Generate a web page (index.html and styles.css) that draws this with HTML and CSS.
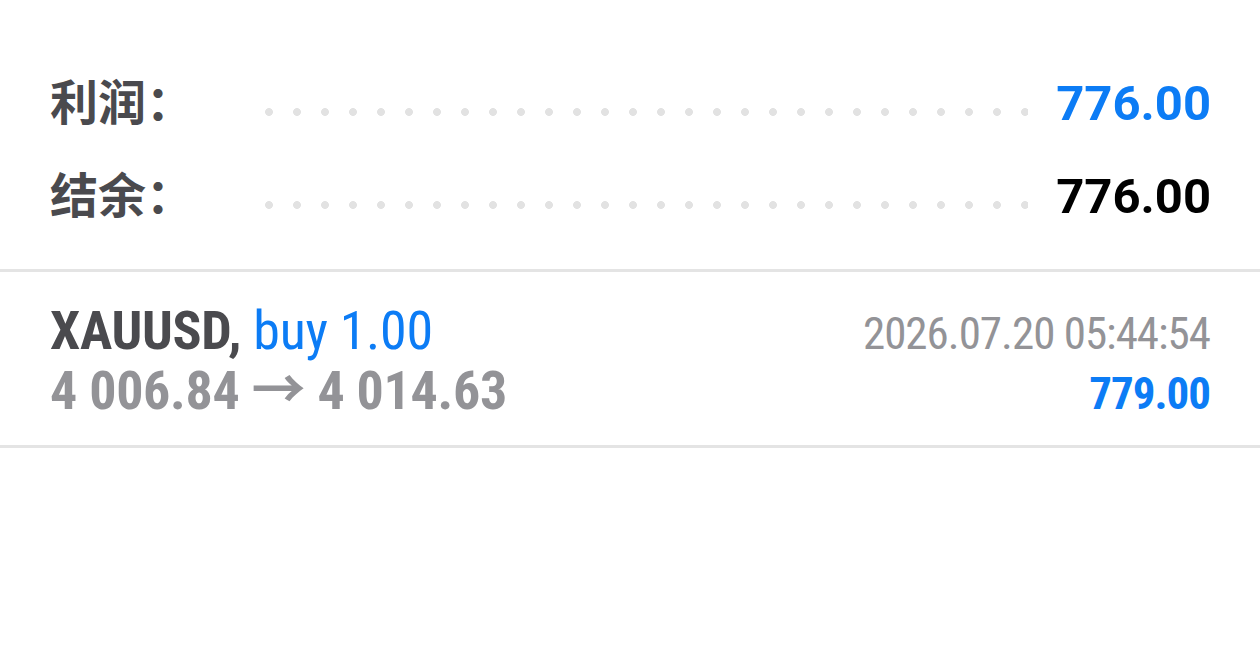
FILE: index.html
```html
<!DOCTYPE html>
<html lang="zh-CN">
<head>
<meta charset="utf-8">
<title>交易结果</title>
<link rel="stylesheet" href="styles.css">
</head>
<body>
  <section class="summary">
    <div class="summary-row">
      <span class="label">利润：</span>
      <span class="leader"></span>
      <span class="value value-profit">776.00</span>
    </div>
    <div class="summary-row">
      <span class="label">结余：</span>
      <span class="leader"></span>
      <span class="value">776.00</span>
    </div>
  </section>

  <section class="deal">
    <div class="deal-main">
      <div class="deal-title"><span class="symbol">XAUUSD,</span> <span class="side">buy 1.00</span></div>
      <div class="deal-prices">4 006.84 → 4 014.63</div>
    </div>
    <div class="deal-meta">
      <div class="deal-time">2026.07.20 05:44:54</div>
      <div class="deal-profit">779.00</div>
    </div>
  </section>
</body>
</html>
```

FILE: styles.css
```css
html, body {
  margin: 0;
  padding: 0;
  background: #ffffff;
}

body {
  font-family: Roboto, "Noto Sans CJK SC", sans-serif;
  color: #4a4a4e;
}

/* summary block: label, dotted leader, amount */
.summary {
  padding: 57px 49px 26px 50px;
  border-bottom: 3px solid #e4e4e4;
}

.summary-row {
  display: flex;
  align-items: center;
  height: 93px;
}

.label {
  width: 215px;
  flex: none;
  margin-bottom: 10px;
  font-family: "Noto Sans CJK SC", sans-serif;
  font-weight: 700;
  font-size: 48px;
  line-height: 1;
  color: #4a4a4e;
}

.leader {
  flex: 1;
  height: 8px;
  margin-top: 16px;
  margin-right: 28px;
  background-image: radial-gradient(circle at 4px 4px, #e2e2e2 3.6px, rgba(226, 226, 226, 0) 4.2px);
  background-size: 28px 8px;
  background-repeat: repeat-x;
}

.value {
  flex: none;
  font-family: Roboto, sans-serif;
  font-weight: 700;
  font-size: 49px;
  line-height: 1;
  color: #000000;
}

.value-profit {
  color: #0c7cf5;
}

/* deal row */
.deal {
  display: flex;
  align-items: flex-start;
  justify-content: space-between;
  padding: 29px 50px 21px 50px;
  border-bottom: 3px solid #e4e4e4;
  font-stretch: 75%;
}

.deal-main,
.deal-meta {
  line-height: 60px;
}

.deal-main {
  letter-spacing: -0.3px;
}

.deal-meta {
  text-align: right;
  padding-top: 3px;
  letter-spacing: -1px;
}

.deal-title {
  font-size: 54px;
}

.symbol {
  font-weight: 700;
  color: #4a4a4e;
}

.side {
  color: #0c7cf5;
}

.deal-prices {
  font-size: 54px;
  font-weight: 700;
  color: #939397;
}

.deal-time {
  font-size: 45px;
  color: #939397;
}

.deal-profit {
  font-size: 45px;
  font-weight: 700;
  color: #0c7cf5;
}
```
